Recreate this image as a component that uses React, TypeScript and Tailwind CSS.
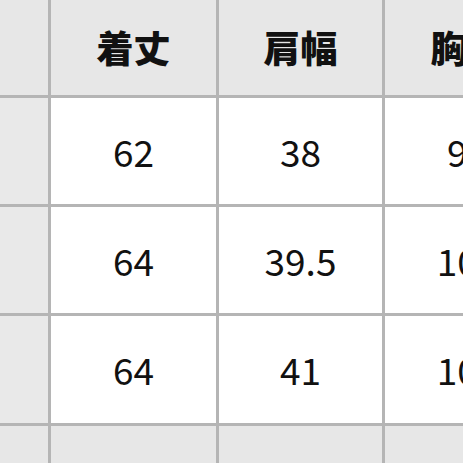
const header = ["", "着丈", "肩幅", "胸囲"];

const rows = [
  ["S", "62", "38", "96"],
  ["M", "64", "39.5", "100"],
  ["L", "64", "41", "104"],
];

export default function App() {
  return (
    <div
      className="w-[463px] h-[463px] overflow-hidden bg-white"
      style={{ fontFamily: '"Noto Sans CJK JP", "Noto Sans", sans-serif' }}
    >
      <div className="grid grid-cols-[48px_165px_163px_165px] grid-rows-[95px_106px_106px_107px_60px] gap-[3px] bg-[#b5b5b5] w-max text-[#111]">
        {header.map((h, i) => (
          <div
            key={"h" + i}
            className="flex items-center justify-center bg-[#e7e7e7] text-[37px] font-black leading-none"
          >
            {i === 0 ? "" : h}
          </div>
        ))}
        {rows.map((r, ri) =>
          r.map((c, ci) => (
            <div
              key={ri + "-" + ci}
              className={
                ci === 0
                  ? "bg-[#e9e9e9]"
                  : "flex items-center justify-center bg-white text-[37px] leading-none"
              }
            >
              {ci === 0 ? "" : c}
            </div>
          ))
        )}
        {header.map((_, i) => (
          <div key={"f" + i} className="bg-[#e7e7e7]" />
        ))}
      </div>
    </div>
  );
}
